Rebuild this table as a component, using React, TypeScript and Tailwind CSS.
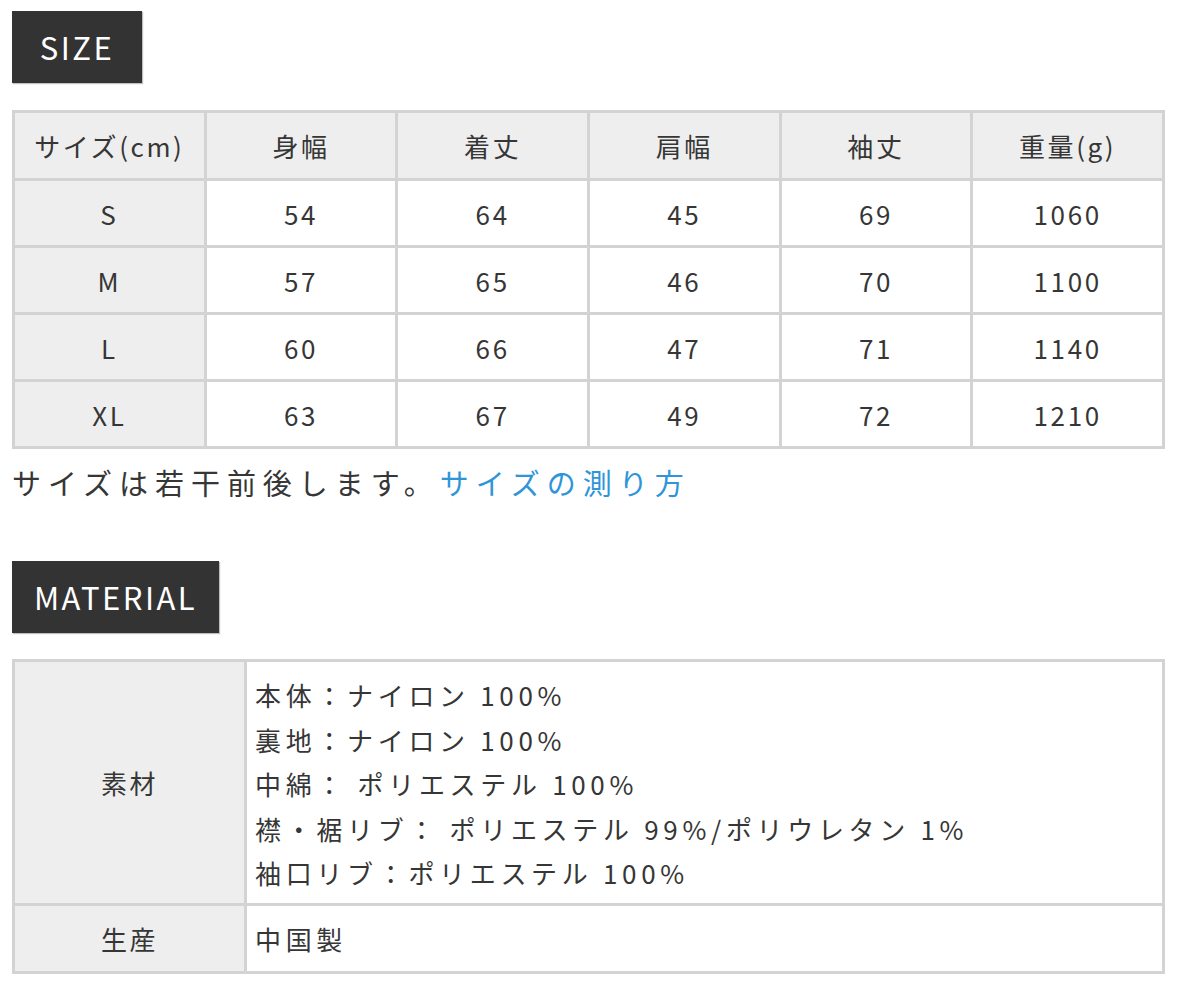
const font = { fontFamily: '"Noto Sans CJK JP", "Noto Sans", sans-serif' }

const sizeHeaders = ['サイズ(cm)', '身幅', '着丈', '肩幅', '袖丈', '重量(g)']

const sizeRows = [
  ['S', '54', '64', '45', '69', '1060'],
  ['M', '57', '65', '46', '70', '1100'],
  ['L', '60', '66', '47', '71', '1140'],
  ['XL', '63', '67', '49', '72', '1210'],
]

const materialLines = [
  '本体：ナイロン 100%',
  '裏地：ナイロン 100%',
  '中綿： ポリエステル 100%',
  '襟・裾リブ： ポリエステル 99%/ポリウレタン 1%',
  '袖口リブ：ポリエステル 100%',
]

function Badge({ label, width }: { label: string; width: string }) {
  return (
    <div
      className={`flex h-[72px] items-center justify-center bg-[#333333] text-[31px] tracking-[0.08em] text-white shadow-[1px_1px_1px_rgba(0,0,0,0.25)] ${width}`}
    >
      {label}
    </div>
  )
}

export default function App() {
  return (
    <div className="min-h-[1006px] bg-white pl-[12px] pr-[35px] pt-[11px] text-[#363636]" style={font}>
      {/* SIZE */}
      <Badge label="SIZE" width="w-[130px]" />

      <table className="mt-[27px] w-[1153px] table-fixed border-collapse border-[3px] border-[#d3d3d3] text-[26px] tracking-[0.1em]">
        <thead>
          <tr className="bg-[#eeeeee]">
            {sizeHeaders.map((h) => (
              <th key={h} className="h-[68px] border-[3px] border-[#d3d3d3] p-0 text-center font-normal">
                {h}
              </th>
            ))}
          </tr>
        </thead>
        <tbody>
          {sizeRows.map((row) => (
            <tr key={row[0]}>
              {row.map((cell, i) => (
                <td
                  key={i}
                  className={`h-[67px] border-[3px] border-[#d3d3d3] p-0 text-center ${i === 0 ? 'bg-[#eeeeee]' : 'bg-white'}`}
                >
                  {cell}
                </td>
              ))}
            </tr>
          ))}
        </tbody>
      </table>

      <p className="mt-[13px] text-[29px] leading-[40px] tracking-[0.24em]">
        サイズは若干前後します。<a href="#" className="text-[#2f95d8]">サイズの測り方</a>
      </p>

      {/* MATERIAL */}
      <div className="mt-[59px]">
        <Badge label="MATERIAL" width="w-[207px]" />
      </div>

      <table className="mt-[26px] w-[1153px] table-fixed border-collapse border-[3px] border-[#d3d3d3] text-[26px] tracking-[0.1em]">
        <colgroup>
          <col className="w-[232px]" />
          <col />
        </colgroup>
        <tbody>
          <tr>
            <th className="border-[3px] border-[#d3d3d3] bg-[#eeeeee] p-0 text-center font-normal">素材</th>
            <td className="border-[3px] border-[#d3d3d3] px-[8px] pb-[7px] pt-[11px] tracking-[0.18em]">
              {materialLines.map((line) => (
                <div key={line} className="leading-[44.5px]">
                  {line}
                </div>
              ))}
            </td>
          </tr>
          <tr>
            <th className="h-[68px] border-[3px] border-[#d3d3d3] bg-[#eeeeee] p-0 text-center font-normal">生産</th>
            <td className="border-[3px] border-[#d3d3d3] px-[8px] tracking-[0.18em]">中国製</td>
          </tr>
        </tbody>
      </table>
    </div>
  )
}
